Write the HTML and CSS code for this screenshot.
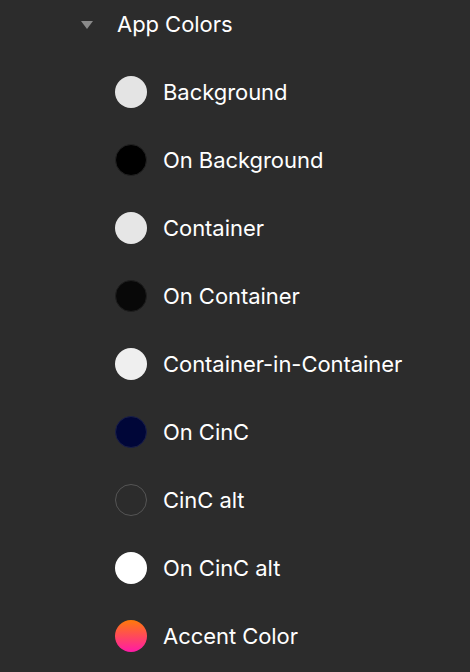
FILE: index.html
```html
<!DOCTYPE html>
<html>
<head>
<meta charset="utf-8">
<link rel="stylesheet" href="styles.css">
</head>
<body>
<div class="panel">
  <div class="group-header">
    <span class="caret"></span>
    <span class="group-title">App Colors</span>
  </div>
  <ul class="swatches">
    <li class="swatch"><span class="dot dot-bg"></span><span class="label">Background</span></li>
    <li class="swatch"><span class="dot dot-on-bg"></span><span class="label">On Background</span></li>
    <li class="swatch"><span class="dot dot-container"></span><span class="label">Container</span></li>
    <li class="swatch"><span class="dot dot-on-container"></span><span class="label">On Container</span></li>
    <li class="swatch"><span class="dot dot-cinc"></span><span class="label">Container-in-Container</span></li>
    <li class="swatch"><span class="dot dot-on-cinc"></span><span class="label">On CinC</span></li>
    <li class="swatch"><span class="dot dot-cinc-alt"></span><span class="label">CinC alt</span></li>
    <li class="swatch"><span class="dot dot-on-cinc-alt"></span><span class="label">On CinC alt</span></li>
    <li class="swatch"><span class="dot dot-accent"></span><span class="label">Accent Color</span></li>
  </ul>
</div>
</body>
</html>
```
FILE: styles.css
```css
html, body {
  margin: 0;
  padding: 0;
  background: #2c2c2c;
}
body {
  font-family: Inter, "Noto Sans", sans-serif;
  color: #ffffff;
  width: 470px;
  height: 672px;
  overflow: hidden;
}
.panel {
  padding-top: 8px;
}
.group-header {
  display: flex;
  align-items: center;
  height: 32px;
  padding-left: 81px;
}
.caret {
  width: 0;
  height: 0;
  border-left: 6px solid transparent;
  border-right: 6px solid transparent;
  border-top: 8px solid #8a8a8a;
  margin-right: 24px;
  margin-top: 1px;
}
.group-title {
  font-size: 22px;
  font-weight: 400;
  letter-spacing: -0.05px;
}
.swatches {
  list-style: none;
  margin: 0;
  padding: 36px 0 0 115px;
  display: flex;
  flex-direction: column;
  gap: 36px;
}
.swatch {
  display: flex;
  align-items: center;
  height: 32px;
}
.dot {
  width: 32px;
  height: 32px;
  border-radius: 50%;
  box-sizing: border-box;
  margin-right: 16px;
  flex: none;
}
.label {
  font-size: 22px;
  font-weight: 400;
  letter-spacing: -0.05px;
}
.dot-bg { background: #e4e4e4; }
.dot-on-bg { background: #000000; border: 1px solid #222; }
.dot-container { background: #e6e6e6; }
.dot-on-container { background: #080808; border: 1px solid #1e1e1e; }
.dot-cinc { background: #efefef; }
.dot-on-cinc { background: #000638; border: 1px solid #1a1f48; }
.dot-cinc-alt { background: #2c2c2c; border: 1px solid #555555; }
.dot-on-cinc-alt { background: #ffffff; }
.dot-accent { background: linear-gradient(180deg, #ff7a0a 0%, #ff1aa8 100%); }
```
